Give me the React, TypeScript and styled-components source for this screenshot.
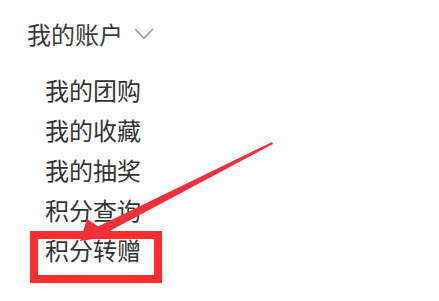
import styled, { createGlobalStyle } from 'styled-components';

const GlobalStyle = createGlobalStyle`
  html, body {
    margin: 0;
    padding: 0;
    background: #fff;
  }
  body {
    font-family: "Noto Sans CJK SC", "Noto Sans", sans-serif;
    color: #333;
  }
`;

const Page = styled.div`
  position: relative;
  width: 439px;
  height: 301px;
  overflow: hidden;
  padding: 14px 0 0 27px;
  box-sizing: border-box;
`;

const Title = styled.div`
  display: flex;
  align-items: center;
  gap: 11px;
  height: 40px;
  font-size: 24px;
  line-height: 40px;
  color: #3a3a3a;
`;

const Menu = styled.ul`
  list-style: none;
  margin: 16px 0 0 18px;
  padding: 0;
`;

const Item = styled.li<{ $marked?: boolean }>`
  position: relative;
  width: 96px;
  font-size: 24px;
  line-height: 40px;
  height: 40px;
  color: #333;

  ${(p) =>
    p.$marked &&
    `
    &::after {
      content: "";
      position: absolute;
      left: -15px;
      right: -21px;
      top: 1px;
      bottom: -13px;
      border: 8px solid #ff2d2d;
      pointer-events: none;
    }
  `}
`;

const Arrow = styled.svg`
  position: absolute;
  left: 0;
  top: 0;
  pointer-events: none;
`;

const items = ['我的团购', '我的收藏', '我的抽奖', '积分查询', '积分转赠'];

export default function App() {
  return (
    <Page>
      <GlobalStyle />
      <Title>
        我的账户
        <svg width="20" height="12" viewBox="0 0 20 12">
          <polyline points="1,1 10,10 19,1" fill="none" stroke="#9a9a9a" strokeWidth="1.6" />
        </svg>
      </Title>
      <Menu>
        {items.map((t, i) => (
          <Item key={t} $marked={i === items.length - 1}>
            {t}
          </Item>
        ))}
      </Menu>
      <Arrow width="439" height="301" viewBox="0 0 439 301">
        <polygon points="272,142 273,144 104,234 97,227" fill="#f0303a" />
        <polygon points="80,241 87,219 113,236" fill="#f0303a" />
      </Arrow>
    </Page>
  );
}
